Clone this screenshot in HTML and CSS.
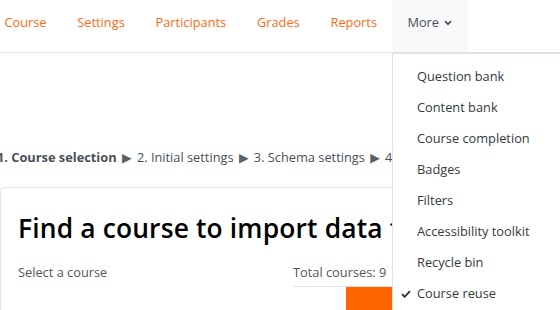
FILE: index.html
```html
<!DOCTYPE html>
<html lang="en">
<head>
  <meta charset="UTF-8" />
  <meta name="viewport" content="width=device-width, initial-scale=1.0"/>
  <title>Course reuse</title>
  <link rel="stylesheet" href="styles.css">
</head>
<body>

<nav class="secondary-nav">
  <a href="#" class="nav-link">Course</a>
  <a href="#" class="nav-link">Settings</a>
  <a href="#" class="nav-link">Participants</a>
  <a href="#" class="nav-link">Grades</a>
  <a href="#" class="nav-link">Reports</a>
  <a href="#" class="nav-link more">More
    <svg class="chevron" width="8" height="6" viewBox="0 0 8 6"><path d="M1 1.2 L4 4.2 L7 1.2" fill="none" stroke="#495057" stroke-width="1.8"/></svg>
  </a>
</nav>

<!-- dropdown of the More tab -->
<ul class="more-menu">
  <li>Question bank</li>
  <li>Content bank</li>
  <li>Course completion</li>
  <li>Badges</li>
  <li>Filters</li>
  <li>Accessibility toolkit</li>
  <li>Recycle bin</li>
  <li class="active">
    <svg class="check" width="10" height="8" viewBox="0 0 10 8"><path d="M1 4.2 L3.6 6.8 L9 1.2" fill="none" stroke="#333" stroke-width="1.9"/></svg>
    Course reuse
  </li>
</ul>

<main>
  <div class="steps">
    <span class="step current">1. Course selection</span>
    <span class="sep">&#9654;</span>
    <span class="step">2. Initial settings</span>
    <span class="sep">&#9654;</span>
    <span class="step">3. Schema settings</span>
    <span class="sep">&#9654;</span>
    <span class="step">4. Confirmation and review</span>
  </div>

  <div class="card">
    <h2>Find a course to import data from:</h2>
    <div class="card-row">
      <span class="label">Select a course</span>
      <div class="total">
        <span class="total-text">Total courses: 9</span>
        <div class="search-btn">Search</div>
      </div>
    </div>
  </div>
</main>

</body>
</html>
```

FILE: styles.css
```css
body {
  font-family: "Open Sans", "Noto Sans", sans-serif;
  margin: 0;
  padding: 0;
  background-color: #ffffff;
  color: #1d2125;
  width: 560px;
  height: 310px;
  overflow: hidden;
  position: relative;
}

.secondary-nav {
  display: flex;
  height: 52px;
  border-bottom: 1px solid #dee2e6;
  margin-left: -11px;
  width: 571px;
  overflow: hidden;
}

.nav-link {
  display: block;
  padding: 11px 15.4px 0;
  font-size: 12.8px;
  line-height: 22px;
  color: #ff6a13;
  text-decoration: none;
  white-space: nowrap;
}

.nav-link.more {
  color: #495057;
  background-color: #f8f9fa;
  height: 41px;
  border-bottom: 2px solid #7fc3cb;
  margin-bottom: -1px;
  padding-left: 15px;
  padding-right: 16px;
}

.chevron {
  margin-left: 2px;
  vertical-align: 1px;
}

.more-menu {
  position: absolute;
  left: 392px;
  top: 53px;
  width: 200px;
  height: 280px;
  margin: 0;
  padding: 7px 0 0;
  list-style: none;
  background: #ffffff;
  border: 1px solid #dee2e6;
  z-index: 10;
}

.more-menu li {
  position: relative;
  height: 31px;
  line-height: 31px;
  padding-left: 24px;
  font-size: 12.8px;
  color: #343a40;
  white-space: nowrap;
}

.check {
  position: absolute;
  left: 8px;
  top: 12px;
}

main {
  padding-top: 93px;
}

.steps {
  margin-left: -3px;
  font-size: 12.8px;
  color: #495057;
  white-space: nowrap;
  line-height: 22px;
  width: 563px;
  overflow: hidden;
}

.step.current {
  font-weight: 700;
}

.sep {
  font-family: "DejaVu Sans", sans-serif;
  font-size: 12.5px;
  margin: 0 2px;
  color: #5a6268;
}

.card {
  margin-top: 18px;
  width: 560px;
  border: 1px solid #e1e4e8;
  border-right: none;
  border-radius: 5px 0 0 0;
  padding: 18px 0 0 17px;
  box-sizing: border-box;
  overflow: hidden;
}

.card h2 {
  margin: 0;
  font-size: 26.4px;
  font-weight: 600;
  letter-spacing: 0.15px;
  line-height: 44px;
  color: #000;
  white-space: nowrap;
}

.card-row {
  display: flex;
  margin-top: 10px;
}

.label {
  width: 275px;
  flex-shrink: 0;
  font-size: 12.8px;
  line-height: 24px;
  color: #555;
}

.total {
  width: 200px;
  flex-shrink: 0;
}

.total-text {
  display: block;
  font-size: 12.8px;
  line-height: 24px;
  color: #555;
  padding-bottom: 2px;
  border-bottom: 1px solid #dee2e6;
}

.search-btn {
  margin-left: 53px;
  width: 100px;
  height: 30px;
  background: #ff6600;
  color: #fff;
  font-size: 12.8px;
  padding: 22px 10px 0;
  box-sizing: border-box;
  overflow: hidden;
}
```
